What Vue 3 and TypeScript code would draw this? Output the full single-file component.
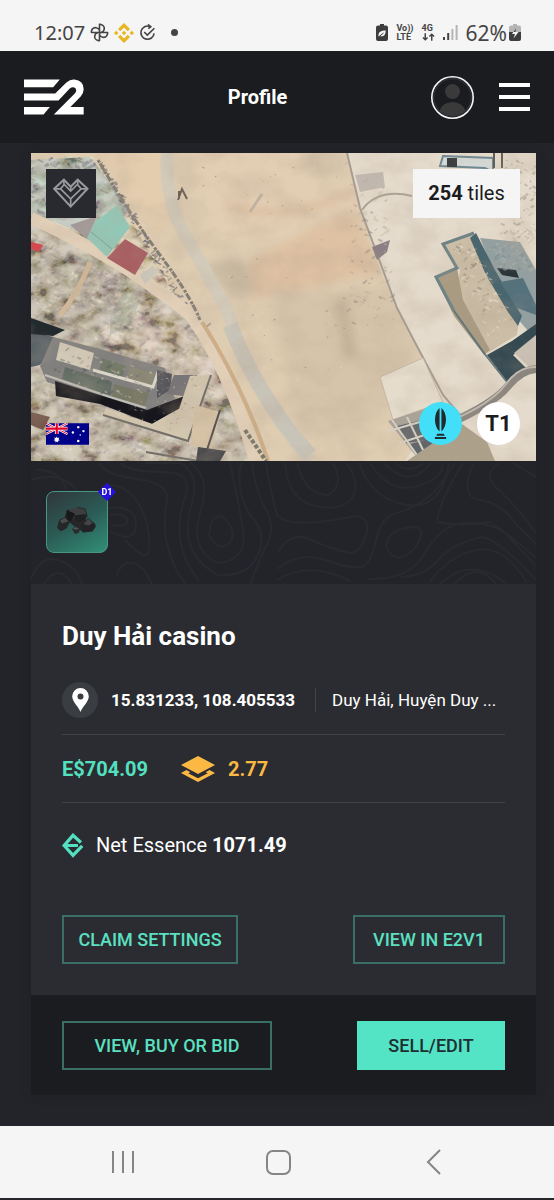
<script setup lang="ts">
interface Speck {
  points: string
  fill: string
  opacity: number
}

interface Zone {
  seed: number
  count: number
  corners: [number, number][]
  size: number
  colors: string[]
  opacity: number
}

function randomizer(seed: number): () => number {
  let state = seed
  return () => {
    state = (state * 1664525 + 1013904223) % 4294967296
    return state / 4294967296
  }
}

// Scatters small irregular fragments over a four-cornered zone of the map.
function scatter(zone: Zone): Speck[] {
  const next = randomizer(zone.seed)
  const [a, b, c, d] = zone.corners
  return Array.from({ length: zone.count }, () => {
    const u = next()
    const v = next()
    const x = (a[0] * (1 - u) + b[0] * u) * (1 - v) + (d[0] * (1 - u) + c[0] * u) * v
    const y = (a[1] * (1 - u) + b[1] * u) * (1 - v) + (d[1] * (1 - u) + c[1] * u) * v
    const turn = next() > 0.5 ? 0.4 : -0.7
    const length = zone.size * (0.5 + next() * 1.3)
    const thickness = zone.size * (0.2 + next() * 0.5)
    const points = [[-1, -1], [1, -0.7], [0.8, 1], [-0.9, 0.8]]
      .map(([px, py]) => {
        const lx = px * length * (0.6 + next() * 0.5)
        const ly = py * thickness
        const rx = lx * Math.cos(turn) - ly * Math.sin(turn)
        const ry = lx * Math.sin(turn) + ly * Math.cos(turn)
        return `${(x + rx).toFixed(1)},${(y + ry).toFixed(1)}`
      })
      .join(' ')
    return { points, fill: zone.colors[Math.floor(next() * zone.colors.length)], opacity: zone.opacity }
  })
}

const rubble = ['#8b8478', '#6f6b68', '#d9cfbd', '#c9bdab', '#e9dfd0', '#85877a', '#bda896', '#7d7888', '#e0d0c0']
const ground: Speck[] = [
  { seed: 11, count: 420, corners: [[31, 232], [110, 275], [180, 325], [31, 345]] as [number, number][], size: 3, colors: rubble, opacity: 0.5 },
  { seed: 23, count: 420, corners: [[31, 335], [210, 325], [240, 461], [31, 461]] as [number, number][], size: 3, colors: rubble, opacity: 0.5 },
  { seed: 37, count: 120, corners: [[31, 160], [90, 158], [112, 208], [31, 220]] as [number, number][], size: 3, colors: ['#4e4b66', '#88b5a5', '#b4a9a4', '#665f6e', '#a8cdbf'], opacity: 0.7 },
  { seed: 41, count: 110, corners: [[97, 160], [105, 165], [196, 318], [182, 312]] as [number, number][], size: 2, colors: ['#5c5964', '#77776c', '#8e887c', '#625e7d'], opacity: 0.6 },
  { seed: 53, count: 60, corners: [[160, 156], [345, 156], [400, 380], [270, 400]] as [number, number][], size: 1, colors: ['#8f7c66', '#7b6d5e', '#f4e6d0'], opacity: 0.5 },
  { seed: 61, count: 80, corners: [[352, 170], [385, 172], [395, 330], [345, 325]] as [number, number][], size: 2, colors: ['#a79b90', '#bfb4a6', '#887f7a'], opacity: 0.4 },
  { seed: 67, count: 120, corners: [[505, 160], [536, 160], [536, 245], [500, 240]] as [number, number][], size: 2, colors: ['#b9afa0', '#9b9286', '#f2ebdf'], opacity: 0.5 },
].flatMap(scatter)

const roofs: Speck[] = [
  { seed: 71, count: 90, corners: [[452, 248], [472, 240], [513, 318], [488, 342]] as [number, number][], size: 2, colors: ['#efe3d2', '#b8a48a', '#8d8679', '#ded2be'], opacity: 0.55 },
  { seed: 79, count: 60, corners: [[55, 346], [158, 372], [150, 405], [50, 378]] as [number, number][], size: 2, colors: ['#d3ccba', '#7a7a76', '#a8a294', '#55585a'], opacity: 0.5 },
  { seed: 83, count: 70, corners: [[155, 372], [205, 372], [190, 438], [105, 412]] as [number, number][], size: 1, colors: ['#8c8378', '#efe5d2', '#b3a794'], opacity: 0.6 },
  { seed: 89, count: 80, corners: [[484, 242], [518, 244], [536, 276], [502, 268]] as [number, number][], size: 2, colors: ['#7d8a8d', '#aab1ad', '#93a0a1'], opacity: 0.6 },
].flatMap(scatter)
</script>

<template>
  <div class="screen">
    <header class="status">
      <div class="status-side">
        <span class="clock">12:07</span>
        <svg viewBox="0 0 20 20" width="19" height="19" fill="none" stroke="#444" stroke-width="1.7" stroke-linejoin="round">
          <path d="M10 10V1.500h1.500A4.200 4.200 0 0 1 10 10h8.500v1.500A4.200 4.200 0 0 1 10 10v8.500H8.500A4.200 4.200 0 0 1 10 10H1.500V8.500A4.200 4.200 0 0 1 10 10" />
        </svg>
        <svg viewBox="0 0 20 20" width="20" height="20" fill="#e9b520">
          <path d="M10 0l6 6-2.300 2.300L10 4.600 6.300 8.300 4 6zM10 20l6-6-2.300-2.300L10 15.400l-3.700-3.700L4 14zM10 7.700l2.300 2.300-2.300 2.300L7.700 10zM2.200 7.800L4.400 10l-2.200 2.200L0 10zM17.800 7.800L20 10l-2.200 2.200L15.600 10z" />
        </svg>
        <svg viewBox="0 0 18 18" width="17" height="17" fill="none" stroke="#444" stroke-width="1.700">
          <path d="M11.500 2.600A7 7 0 1 0 16 10M5.500 8.500l3.300 3.300L16.300 4.500" /><path d="M9.500.5l3 2.300-2.700 2.200" />
        </svg>
        <span class="dot"></span>
      </div>
      <div class="status-side right">
        <svg viewBox="0 0 12 17" width="12" height="17">
          <path d="M4 0h4v1.500h2a2 2 0 0 1 2 2V15a2 2 0 0 1-2 2H2a2 2 0 0 1-2-2V3.500a2 2 0 0 1 2-2h2z" fill="#3d3d3d" />
          <path d="M2.500 12.500C2 8 5 6.500 9.700 6.500c0 5-2.500 6.500-6 5.500" fill="#f5f5f5" /><path d="M2.500 13l5-4" stroke="#3d3d3d" />
        </svg>
        <span class="net">Vo))<br />LTE</span>
        <span class="net">4G
          <svg viewBox="0 0 14 8" width="13" height="8" fill="none" stroke="#444" stroke-width="1.600"><path d="M3.500 0v7M1 4.500L3.500 7 6 4.500M10.500 8V1M8 3.500L10.500 1 13 3.500" /></svg>
        </span>
        <svg viewBox="0 0 15 15" width="15" height="15">
          <path d="M0 12h2v3H0zM4.200 8h2v7h-2z" fill="#444" /><path d="M8.400 4h2v11h-2zM12.600 0h2v15h-2z" fill="#b5b5b5" />
        </svg>
        <span class="charge">62%
          <svg viewBox="0 0 12 17" width="12" height="17">
            <path d="M4 0h4v1.500h2a2 2 0 0 1 2 2V9H0V3.500a2 2 0 0 1 2-2h2z" fill="#b5b5b5" /><path d="M0 8h12v7a2 2 0 0 1-2 2H2a2 2 0 0 1-2-2z" fill="#3d3d3d" />
            <path d="M7 4L3 10h3l-1.500 4.500L9.500 8h-3z" fill="#f5f5f5" /><path d="M7 4L4.500 8h2z" fill="#3d3d3d" />
          </svg>
        </span>
      </div>
    </header>

    <nav class="topbar">
      <a href="#" class="logo" aria-label="Home">
        <svg viewBox="72 242 181 107" width="60" height="36" fill="#fff">
          <path d="M72 243H180L160 266H72Z" />
          <path d="M72 285H166L200 252Q211 242 224 243Q252 246 252 272Q252 284 243 294L212 326H252V348H162L226 284Q232 276 228 270Q220 262 210 270L176 306H72Z" />
          <path d="M72 326H150L131 348H72Z" />
        </svg>
      </a>
      <h1>Profile</h1>
      <div class="top-actions">
        <button class="plain" aria-label="Account">
          <svg viewBox="0 0 43 43" width="43" height="43">
            <circle cx="21.500" cy="21.500" r="20.700" fill="#1b1c20" stroke="#f5f5f5" stroke-width="1.600" />
            <circle cx="21.500" cy="21.500" r="18.800" fill="none" stroke="#2e2f32" stroke-width="1.500" />
            <circle cx="21.500" cy="15.500" r="7.500" fill="#3a3a3b" /><path d="M8.500 35a13.200 11 0 0 1 26 0 19 19 0 0 1-26 0z" fill="#3a3a3b" />
          </svg>
        </button>
        <button class="plain burger" aria-label="Menu"><span></span><span></span><span></span></button>
      </div>
    </nav>

    <main>
      <article class="card">
        <div class="map">
          <svg class="aerial" viewBox="31 153 505 308" preserveAspectRatio="xMidYMid slice" role="img" aria-label="Aerial view of the property">
            <defs>
              <filter id="terrain" x="0" y="0" width="100%" height="100%">
                <feTurbulence type="fractalNoise" baseFrequency="0.03 0.04" numOctaves="5" seed="8" />
                <feColorMatrix values="0 0 0 0 .45  0 0 0 0 .36  0 0 0 0 .27  1.6 0 0 0 -.62" />
              </filter>
              <filter id="grit" x="0" y="0" width="100%" height="100%">
                <feTurbulence type="fractalNoise" baseFrequency="0.05 0.07" numOctaves="5" seed="5" />
                <feColorMatrix values="2.4 0 0 0 -.62  2.4 .2 0 0 -.76  2.2 0 .3 0 -.8  0 0 0 0 .38" />
                <feComposite in2="SourceGraphic" operator="in" />
              </filter>
              <filter id="soft"><feGaussianBlur stdDeviation="5" /></filter>
              <filter id="fine"><feGaussianBlur stdDeviation=".6" /></filter>
            </defs>
            <rect x="31" y="153" width="505" height="308" fill="#dfcdb2" />
            <g filter="url(#soft)">
              <path d="M190 150H350L365 230 300 250 210 230Z" fill="#e2ceb3" />
              <path d="M250 260L350 210 385 270 300 290 250 300Z" fill="#dec1a3" />
              <path d="M270 290L390 290 420 350 380 420 300 440Z" fill="#d6c4aa" />
              <path d="M95 150H165L170 210 160 240Z" fill="#e4cdae" />
              <path d="M300 153H345L350 180 310 175Z" fill="#d8c7ad" />
              <path d="M205 265L240 255 255 290 235 300Z" fill="#c9baa2" />
              <path d="M225 205Q290 225 355 190" fill="none" stroke="#d5b08f" stroke-width="4" />
              <path d="M340 300L352 360" fill="none" stroke="#c3b097" stroke-width="10" />
            </g>
            <g filter="url(#fine)">
              <path d="M31 218L105 255 180 305 225 365 255 461H31Z" fill="#bcb09e" />
              <path d="M60 250L105 265 160 310 120 350 31 330V260Z" fill="#aca291" />
              <path d="M120 290L170 310 205 345 225 400 190 390 150 355 100 340Z" fill="#cbb9a7" />
              <path d="M110 315L125 290 140 300 130 325 110 335Z" fill="#999d8c" />
              <path d="M31 160L90 157 130 210 100 240 31 213Z" fill="#a6b2a9" />
              <path d="M167 153Q165 200 185 235T227 310Q250 390 310 461" fill="none" stroke="#d3cab9" stroke-width="13" />
              <path d="M230 325Q260 400 310 455" fill="none" stroke="#c9c4b8" stroke-width="15" />
              <path d="M178 200L182 189L187 199M179 191V199" fill="none" stroke="#665b52" stroke-width="2" />
              <path d="M250 212L262 194" stroke="#c0b2a0" stroke-width="3" />

              <path d="M347 153H536V461H405L443 402 420 352 397 310 375 255 360 208Z" fill="#e5dbcc" />
              <path d="M347 153L360 208 380 262 397 308 420 352 443 395 460 415" fill="none" stroke="#a69c90" stroke-width="2" />
              <path d="M362 210Q378 188 412 196" fill="none" stroke="#aba395" stroke-width="2" />
              <path d="M355 175L383 172 385 187 360 192Z" fill="#c2b9b0" />
              <path d="M372 247L390 240 387 252 377 260Z" fill="#8d8085" />
              <path d="M443 156L493 158V172L485 168 440 166Z" fill="#d4d9d5" stroke="#6f8992" stroke-width="2" />
              <rect x="447" y="158" width="10" height="9" fill="#3c4143" />
              <path d="M494 153V168M502 153V168" stroke="#615c58" stroke-width="2" />
            </g>
            <g filter="url(#fine)">
              <polygon v-for="(speck, i) in ground" :key="i" :points="speck.points" :fill="speck.fill" :opacity="speck.opacity" />
            </g>
            <path filter="url(#grit)" d="M31 160L92 157 125 210 180 305 225 365 255 461H31Z" />
            <g filter="url(#fine)">
              <path d="M31 218Q100 250 140 278T190 315Q230 370 255 461" fill="none" stroke="#e2cfb8" stroke-width="12" />
              <path d="M60 315Q80 290 90 262" fill="none" stroke="#d3b999" stroke-width="5" />
              <path d="M98 160Q130 215 160 255T200 320" fill="none" stroke="#827d75" stroke-width="3" stroke-dasharray="3 1 7 2" />
              <path d="M202 322Q245 390 268 461" fill="none" stroke="#cdae88" stroke-width="4" />
              <path d="M245 430L266 461" fill="none" stroke="#77776a" stroke-width="4" stroke-dasharray="4 2" />

              <path d="M70 225L97 216 87 239Z" fill="#a39a99" />
              <path d="M117 205L130 227 107 257 87 238 95 222Z" fill="#93c9b8" />
              <path d="M91 232L112 249" stroke="#73a598" />
              <path d="M125 239L148 253 135 275 107 258Z" fill="#a85e62" />
              <path d="M31 242L43 245 39 252 31 249Z" fill="#d4494f" />
              <path d="M140 275L153 265 158 272 145 284Z" fill="#ccc8bc" />
              <path d="M31 332L54 337 60 341 40 365 31 367Z" fill="#566066" />
              <path d="M31 318L65 330 53 336 31 334Z" fill="#24292d" />
              <path d="M53 337L100 349 165 368 175 400 148 415 47 382 40 366Z" fill="#81807f" />
              <path d="M60 342L94 353 90 370 56 360Z" fill="#d3c9b7" />
              <path d="M102 358L126 366 122 378 99 371Z" fill="#6f7766" />
              <path d="M130 367L155 373 151 386 127 379Z" fill="#8a8774" />
              <path d="M65 367L112 382 110 396 62 379Z" fill="#626c64" />
              <path d="M114 384L149 393 145 406 112 397Z" fill="#777865" />
              <path d="M93 370L153 387 158 372" fill="none" stroke="#ded9cd" stroke-width="3" />
              <path d="M45 375L110 397 146 408" fill="none" stroke="#c2c1ba" stroke-width="2" />
              <path d="M55 381L147 410 187 395 180 408 152 424 100 404 56 396Z" fill="#15191e" />
              <path d="M157 370L172 374 170 390 157 398Z" fill="#55545b" />
              <path d="M174 375H197L190 397 167 394Z" fill="#787577" />
              <path d="M190 376L211 375 188 440 103 415 106 408 152 424 179 409Z" fill="#d3c6af" />
              <path d="M103 415L188 441 211 375M146 452L198 461" fill="none" stroke="#716e68" stroke-width="2" />
              <path d="M195 405L220 412 212 448 190 446Z" fill="#d6c2a5" />
              <path d="M220 410L207 450" stroke="#504f51" stroke-width="2" />
              <path d="M198 447L226 451 220 461H196Z" fill="#48494c" />
              <path d="M31 412L50 417 43 430 31 425Z" fill="#74594b" />

              <path d="M480 238L520 242 536 270V340L510 310Z" fill="#93a0a1" />
              <path d="M443 243L473 233 520 312 517 335 487 353 455 303 460 270 443 246Z" fill="#cbbda6" />
              <path d="M435 277L457 268 463 300 490 350 484 355 454 316Z" fill="#a99b82" />
              <path d="M454 311L436 277L457 268L443 244L474 233" fill="none" stroke="#6c8286" stroke-width="3" />
              <path d="M476 233L495 270 522 316 518 326 508 312 486 275 470 238Z" fill="#49656e" />
              <path d="M500 282L523 278 536 305V315L517 308Z" fill="#55717c" />
              <path d="M497 268L516 270 519 278 502 275Z" fill="#2c3639" />
              <path d="M487 355L512 341 536 324V340L513 355 530 372 507 382Z" fill="#344851" />
              <path d="M454 311L484 353 507 382" fill="none" stroke="#5f7478" stroke-width="2" />
              <path d="M536 335L514 353 536 373Z" fill="#cbc2b6" />
              <path d="M457 420Q495 402 508 386T536 369" fill="none" stroke="#89847e" stroke-width="8" />
              <path d="M457 418Q493 402 506 384T536 367" fill="none" stroke="#c0bab1" stroke-width="2" />
              <path d="M380 377L423 358 443 402 393 420Z" fill="#e5dccb" stroke="#c4b7a5" />
              <path d="M388 421L440 404 442 447 415 455Z" fill="#aaa398" />
              <path d="M397 426L422 420 426 440 406 443ZM410 444L433 438 437 452 418 456Z" fill="#62656a" />
              <path d="M392 420L417 455M407 417L424 452M389 431L440 416M400 443L440 430" stroke="#d7d2c6" stroke-width="2" />
              <path d="M462 424L487 442 495 461H407L430 445Z" fill="#ada18b" />
            </g>
            <g filter="url(#fine)">
              <polygon v-for="(speck, i) in roofs" :key="i" :points="speck.points" :fill="speck.fill" :opacity="speck.opacity" />
            </g>
            <rect x="31" y="153" width="505" height="308" filter="url(#terrain)" opacity=".35" />
          </svg>

          <div class="map-overlay">
            <div class="overlay-row">
              <button class="heart" aria-label="Add to favourites">
                <svg viewBox="100 98 106 92" width="36" height="31" fill="none" stroke="#9a9a9c" stroke-width="6" stroke-linejoin="miter">
                  <path d="M103 130L132 103 152 124 173 103 202 130 152 183Z" />
                  <path d="M104 130L122 130 152 160 183 130H202M122 130L133 117 152 137 172 117 183 130M132 104V118M173 104V118M152 124V137M152 160V182" stroke-width="5" />
                </svg>
              </button>
              <p class="tiles"><b>254</b> tiles</p>
            </div>
            <div class="overlay-row bottom">
              <svg class="flag" viewBox="0 0 44 22" width="43" height="22" role="img" aria-label="Australia">
                <path d="M0 0H44V22H0Z" fill="#00008b" />
                <path d="M0 0L22 11M22 0L0 11" stroke="#fff" stroke-width="2.400" /><path d="M0 0L22 11M22 0L0 11" stroke="#e4002b" stroke-width=".9" />
                <path d="M11 0V11M0 5.500H22" stroke="#fff" stroke-width="3.800" /><path d="M11 0V11M0 5.500H22" stroke="#e4002b" stroke-width="2.200" />
                <g fill="#fff"><path d="M11 13.500l.8 1.600 1.800-.4-.8 1.600 1.400 1.200-1.800.4v1.800L11 18.600l-1.400 1.100v-1.800l-1.800-.4 1.400-1.200-.8-1.600 1.800.4z" />
                  <circle cx="33" cy="4" r="1.200" /><circle cx="27.500" cy="9.500" r="1.200" /><circle cx="38.300" cy="8" r="1.200" /><circle cx="33" cy="18.200" r="1.300" /><circle cx="35" cy="12" r=".8" /></g>
              </svg>
              <div class="badges">
                <span class="badge cyan">
                  <svg viewBox="0 0 16 34" width="15" height="33" fill="#202b30">
                    <path d="M7 .5C.5 6 .5 20 7 25.500zM9 .5c6.500 5.500 6.500 19.500 0 25zM4.500 28h7l1 2H3.500zM2 31.500h12v2H2z" />
                  </svg>
                </span>
                <span class="badge">T1</span>
              </div>
            </div>
          </div>
        </div>

        <section class="resources">
          <svg class="contours" viewBox="31 461 505 123" preserveAspectRatio="xMidYMid slice" fill="none" stroke="#292a2f" stroke-width="2" aria-hidden="true">
            <path d="M31 480Q62 470 78 492M37 470Q62 470 66 490M31 579Q40 555 58 560T82 584M44 584Q58 562 72 584M116 576Q126 552 145 571L152 584M106 484Q140 486 148 530T125 540M107 508Q137 505 136 525T110 531M110 515Q125 512 127 520T111 525" />
            <path d="M99 463Q105 475 137 479T167 500Q158 545 185 584M120 463Q130 472 163 472T184 500Q170 545 199 581M145 463H181Q202 476 190 510Q180 555 218 575Q248 577 258 555T250 515Q235 490 241 463M190 462Q211 478 201 510Q188 550 218 563Q248 560 243 530T230 463M209 535Q211 515 221 516Q235 525 232 540Q220 555 209 535ZM252 463Q255 490 266 510T264 550L250 584M266 463Q269 485 277 515Q290 530 355 516Q371 517 366 535T350 553Q333 550 312 540T278 552M285 463Q288 500 315 506T352 498Q361 485 347 463M297 463Q305 495 328 495Q345 485 333 463M277 569Q300 551 325 560T361 567Q371 565 376 540T400 512Q430 502 443 480L455 463M277 580Q310 560 350 581M359 463Q372 500 407 505T449 463M370 463Q391 495 418 486T442 463M384 463Q410 490 431 463M395 463Q410 475 423 463M386 545Q388 528 416 527Q428 530 413 550Q393 567 386 545ZM369 579Q410 580 425 553T463 523Q490 522 505 533L536 566M401 577Q425 576 438 560T482 537Q500 540 536 580M429 583Q449 555 477 550T527 583M440 584Q470 555 507 584M454 584Q478 560 496 584M463 463Q440 500 437 522Q460 527 490 522Q510 535 536 558M474 463Q459 495 478 500Q500 501 516 524L536 544M499 463Q480 475 500 491Q520 510 536 533M513 463L536 477" />
          </svg>
          <div class="resource">
            <svg viewBox="4 6 62 62" width="44" height="44" role="img" aria-label="Coal">
              <path d="M18 28L23 19 29 21 36 16 47 18 50 29 46 34 52 34 62 43 57 50 44 51 35 46 24 37 17 36Z" fill="#262729" />
              <path d="M24 20l10-3 12 2 2 7-14 2-5 6-10-5z" fill="#3e3e40" /><path d="M30 28l16-2 1 8-12 3z" fill="#202123" /><path d="M20 20l12 5-4 10-8 1z" fill="#17181a" />
              <path d="M10 34L18 30 25 37 20 46 12 50 7 45Z" fill="#242628" /><path d="M11 35l7-4 5 5-9 3z" fill="#4b4b4d" />
              <path d="M42 40L51 31 61 40 57 50 43 52Z" fill="#222325" /><path d="M44 40l7-8 6 6-5 4z" fill="#454547" />
              <path d="M28 47L33 43 39 45 38 52 32 54Z" fill="#292a2c" /><path d="M29 47l4-3 5 2-4 2z" fill="#525254" />
            </svg>
            <span class="level">D1</span>
          </div>
        </section>

        <section class="details">
          <h2>Duy Hải casino</h2>
          <div class="place line">
            <span class="pin">
              <svg viewBox="0 0 17 24" width="17" height="24"><path fill="#fff" fill-rule="evenodd" d="M8.500 0A8.300 8.300 0 0 0 .2 8.300C.2 14 6.500 18.500 8.500 24c2-5.500 8.300-10 8.300-15.700A8.300 8.300 0 0 0 8.500 0zm0 5.400a3 3 0 1 1 0 6 3 3 0 0 1 0-6z" /></svg>
            </span>
            <b>15.831233, 108.405533</b>
            <span class="region">Duy Hải, Huyện Duy ...</span>
          </div>
          <div class="value line">
            <b class="price">E$704.09</b>
            <svg viewBox="0 0 34 26" width="34" height="26" fill="#fbb943"><path d="M17 0L34 9 17 18 0 9z" /><path d="M5.500 14L0 17l17 9 17-9-5.500-3-4 2.200 2.300 1-9.800 5-9.800-5 2.300-1z" /></svg>
            <b class="rate">2.77</b>
          </div>
          <div class="essence">
            <svg viewBox="98 483 66 76" width="22" height="25" fill="none" stroke="#53e0c0" stroke-width="10">
              <path d="M155 512L131 490 104 521 131 551 159 522" /><path d="M108 521H146" stroke-width="9" />
            </svg>
            <p>Net Essence <b>1071.49</b></p>
          </div>
          <div class="actions">
            <button class="btn claim">CLAIM SETTINGS</button>
            <button class="btn view">VIEW IN E2V1</button>
          </div>
        </section>

        <footer class="actions foot">
          <button class="btn buy">VIEW, BUY OR BID</button>
          <button class="btn solid">SELL/EDIT</button>
        </footer>
      </article>
    </main>

    <nav class="system" aria-label="System">
      <button class="plain" aria-label="Recent apps"><svg viewBox="0 0 24 24" width="24" height="24" stroke="#858585" stroke-width="2"><path d="M2 1V23M12 1V23M22 1V23" /></svg></button>
      <button class="plain" aria-label="Home screen"><svg viewBox="0 0 25 25" width="25" height="25" fill="none" stroke="#858585" stroke-width="2"><rect x="1" y="1" width="23" height="23" rx="6" /></svg></button>
      <button class="plain" aria-label="Back"><svg viewBox="0 0 24 26" width="24" height="26" fill="none" stroke="#858585" stroke-width="2"><path d="M18 1L6 13 18 25" /></svg></button>
    </nav>
  </div>
</template>

<style>
body {
  margin: 0;
  background: #23242a;
}
</style>

<style scoped>
* {
  box-sizing: border-box;
}

.screen {
  display: flex;
  flex-direction: column;
  min-height: 100vh;
  color: #fff;
  background: #23242a;
  font-family: Roboto, sans-serif;
}

svg {
  display: block;
}

h1, h2, p {
  margin: 0;
}

button {
  font-family: inherit;
  cursor: pointer;
}

.plain {
  padding: 0;
  border: 0;
  background: none;
}

.status {
  display: flex;
  justify-content: space-between;
  height: 51px;
  padding: 14px 33px 0 34px;
  color: #444;
  background: #f5f5f5;
  font-family: "Noto Sans", sans-serif;
}

.status-side {
  display: flex;
  align-items: center;
  gap: 5px;
}

.clock {
  font-size: 20px;
  line-height: 24px;
}

.right {
  gap: 8px;
}

.charge {
  display: flex;
  align-items: center;
  gap: 2px;
  font-size: 21px;
  line-height: 24px;
}

.dot {
  width: 7px;
  height: 7px;
  margin-left: 10px;
  border-radius: 50%;
  background: #444;
}

.net {
  font-family: Roboto, sans-serif;
  font-size: 9px;
  font-weight: 700;
  line-height: 9px;
}

.topbar {
  display: flex;
  align-items: center;
  justify-content: space-between;
  height: 92px;
  padding: 0 24px;
  background: #1b1c20;
}

h1 {
  font-size: 20px;
  line-height: 28px;
}

.top-actions {
  display: flex;
  align-items: center;
  gap: 25px;
}

.burger {
  display: flex;
  flex-direction: column;
  gap: 8px;
}

.burger span {
  width: 31px;
  height: 4px;
  background: #fff;
}

main {
  flex: 1;
  padding: 10px 18px 31px 31px;
}

.card {
  box-shadow: 0 0 12px rgb(0 0 0 / 12%);
}

.map {
  position: relative;
}

.aerial {
  width: 100%;
  height: auto;
}

.map-overlay {
  position: absolute;
  inset: 0;
  display: flex;
  flex-direction: column;
  justify-content: space-between;
  padding: 16px 16px 16px 15px;
}

.overlay-row {
  display: flex;
  align-items: flex-start;
  justify-content: space-between;
}

.bottom {
  align-items: flex-end;
}

.heart {
  display: grid;
  place-items: center;
  width: 50px;
  height: 49px;
  padding: 0;
  border: 0;
  background: #292a30;
}

.tiles {
  min-width: 107px;
  padding: 0 15px;
  color: #1b1c20;
  background: #f5f5f5;
  font-size: 20px;
  line-height: 49px;
  text-align: center;
}

.badges {
  display: flex;
  gap: 15px;
}

.badge {
  display: grid;
  place-items: center;
  width: 43px;
  height: 43px;
  border-radius: 50%;
  color: #1b1c20;
  background: #fff;
  font-size: 22px;
  font-weight: 700;
}

.cyan {
  background: #43dff9;
}

.resources {
  position: relative;
  height: 123px;
  padding: 30px 15px;
}

.contours {
  position: absolute;
  inset: 0;
  width: 100%;
  height: 100%;
}

.resource {
  position: relative;
  display: grid;
  place-items: center;
  width: 62px;
  height: 62px;
  border: 1px solid #489783;
  border-radius: 8px;
  background: linear-gradient(150deg, #30363b 0%, #2b5b55 50%, #319078 100%);
}

.level {
  position: absolute;
  top: -9px;
  right: -9px;
  width: 18px;
  height: 18px;
  isolation: isolate;
  font-size: 9px;
  font-weight: 700;
  line-height: 18px;
  text-align: center;
}

.level::before {
  content: "";
  position: absolute;
  inset: 0;
  z-index: -1;
  background: #2410e0;
  clip-path: polygon(50% 0, 100% 50%, 50% 100%, 0 50%);
}

.details {
  padding: 34px 31px 31px;
  background: #2b2c31;
}

h2 {
  margin-bottom: 28px;
  font-size: 26px;
  line-height: 36px;
}

.line {
  display: flex;
  align-items: center;
  border-bottom: 1px solid #424348;
}

.place {
  height: 53px;
  padding-bottom: 16px;
  font-size: 17px;
  line-height: 24px;
  white-space: nowrap;
}

.pin {
  display: grid;
  place-items: center;
  flex: none;
  width: 36px;
  height: 36px;
  margin-right: 13px;
  border-radius: 50%;
  background: #3a3d42;
}

.region {
  margin-left: 20px;
  padding-left: 16px;
  border-left: 1px solid #424348;
}

.value {
  height: 68px;
  font-size: 20px;
}

.price {
  margin-right: 33px;
  color: #53e0c0;
}

.rate {
  margin-left: 13px;
  color: #fbb943;
}

.essence {
  display: flex;
  align-items: center;
  gap: 12px;
  height: 84px;
  margin-bottom: 28px;
  font-size: 20px;
}

.actions {
  display: flex;
  justify-content: space-between;
}

.btn {
  height: 49px;
  padding: 0 12px;
  border: 2px solid #3a6f66;
  color: #5be0c2;
  background: transparent;
  font-size: 18px;
  font-weight: 500;
}

.claim {
  min-width: 176px;
}

.view {
  min-width: 152px;
}

.buy {
  min-width: 210px;
}

.solid {
  min-width: 148px;
  border-color: #53e3c5;
  color: #202d31;
  background: #53e3c5;
}

.foot {
  padding: 26px 31px 25px;
  background: #1b1c20;
}

.system {
  display: flex;
  align-items: center;
  justify-content: space-around;
  height: 74px;
  padding: 0 43px 0 46px;
  border-bottom: 2px solid #26272b;
  background: #f5f5f5;
}
</style>
